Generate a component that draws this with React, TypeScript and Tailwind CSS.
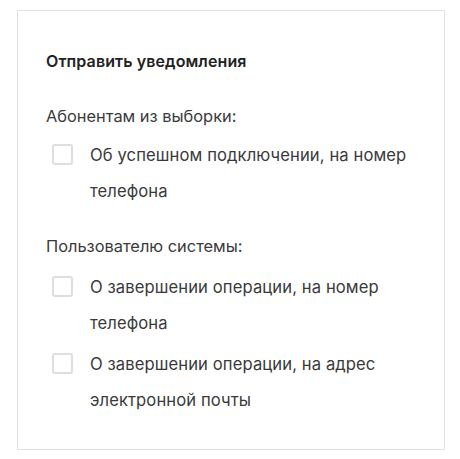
export default function App() {
  const font = { fontFamily: "Inter, 'Noto Sans', sans-serif" };
  const Row = ({ text }: { text: string }) => (
    <div className="flex items-start pl-[6px]">
      <div className="mt-[7px] h-[21px] w-[21px] shrink-0 rounded-[3px] border-2 border-[#dedede] bg-white" />
      <div className="ml-[17px] w-[330px] text-[16.6px] leading-[36px] tracking-[0.1px] text-[#3a3a3a]">{text}</div>
    </div>
  );
  return (
    <div className="h-[459px] w-[460px] bg-white pl-[17px] pt-[10px]" style={font}>
      <div className="flex h-[440px] w-[428px] flex-col border border-[#e2e2e2] pl-[28px] pt-[38px]">
        <div className="text-[16px] font-semibold leading-[24px] tracking-[0.1px] text-[#222]">Отправить уведомления</div>
        <div className="mt-[25px] text-[16.4px] leading-[36px] text-[#3a3a3a]">Абонентам из выборки:</div>
        <div className="mt-[3px]">
          <Row text="Об успешном подключении, на номер телефона" />
        </div>
        <div className="mt-[19px] text-[16.4px] leading-[36px] text-[#3a3a3a]">Пользователю системы:</div>
        <div className="mt-[5px]">
          <Row text="О завершении операции, на номер телефона" />
        </div>
        <div className="mt-[5px]">
          <Row text="О завершении операции, на адрес электронной почты" />
        </div>
      </div>
    </div>
  );
}
